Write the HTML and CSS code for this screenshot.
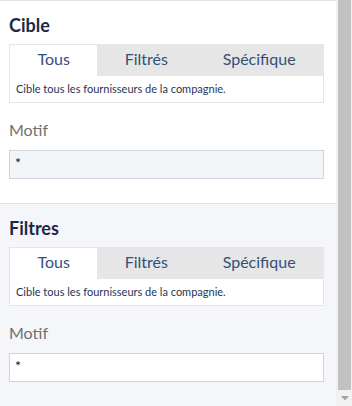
FILE: index.html
```html
<!DOCTYPE html>
<html lang="fr">
<head>
<meta charset="utf-8">
<title>Cible</title>
<link rel="stylesheet" href="styles.css">
</head>
<body>
<div class="app">
  <div class="panel">
    <section class="block block-first">
      <h2 class="block-title">Cible</h2>
      <div class="tabs">
        <div class="tab-list">
          <div class="tab tab-active">Tous</div>
          <div class="tab">Filtrés</div>
          <div class="tab">Spécifique</div>
        </div>
        <div class="tab-desc">Cible tous les fournisseurs de la compagnie.</div>
      </div>
      <div class="field-label">Motif</div>
      <div class="field field-muted">*</div>
    </section>
    <section class="block block-alt">
      <h2 class="block-title">Filtres</h2>
      <div class="tabs">
        <div class="tab-list">
          <div class="tab tab-active">Tous</div>
          <div class="tab">Filtrés</div>
          <div class="tab">Spécifique</div>
        </div>
        <div class="tab-desc">Cible tous les fournisseurs de la compagnie.</div>
      </div>
      <div class="field-label">Motif</div>
      <div class="field">*</div>
    </section>
  </div>
  <div class="scrollbar">
    <div class="scroll-thumb"></div>
    <div class="scroll-btn">
      <svg width="8" height="5" viewBox="0 0 8 5"><polygon points="0,0 8,0 4,4.5" fill="#a3a3a3"/></svg>
    </div>
  </div>
</div>
</body>
</html>
```

FILE: styles.css
```css
* { box-sizing: border-box; }
html, body {
  margin: 0;
  padding: 0;
  height: 406px;
  overflow: hidden;
  font-family: Lato, "Open Sans", sans-serif;
}
.app {
  display: flex;
  height: 406px;
}
.panel {
  flex: 1;
  display: flex;
  flex-direction: column;
  border-top: 1px solid #e3e3e6;
  background: #ffffff;
}
.block {
  padding: 13px 12px 24px 9px;
}
.block-first {
  border-bottom: 1px solid #e3e3e8;
}
.block-alt {
  flex: 1;
  background: #f5f6fa;
  padding-top: 13px;
}
.block-title {
  margin: 0;
  font-size: 18px;
  line-height: 22px;
  font-weight: 700;
  color: #1b2a44;
}
.tabs {
  margin-top: 8px;
  border: 1px solid #e6e6e6;
  background: #fff;
}
.tab-list {
  display: flex;
}
.tab {
  flex: 1 1 auto;
  text-align: center;
  font-size: 16px;
  line-height: 19px;
  padding: 4px 0 8px;
  color: #33507a;
  background: #e6e6e6;
}
.tab-active {
  background: #ffffff;
}
.tab-desc {
  font-size: 11px;
  line-height: 13px;
  padding: 6px 6px 7px;
  color: #1f3556;
}
.field-label {
  margin-top: 17px;
  font-size: 16px;
  line-height: 19px;
  color: #707070;
}
.field {
  margin-top: 11px;
  height: 29px;
  border: 1px solid #cdd5de;
  background: #ffffff;
  font-size: 14px;
  line-height: 16px;
  padding: 4px 5px;
  color: #111;
}
.field-muted {
  background: #f4f5f9;
}
.scrollbar {
  width: 16px;
  display: flex;
  flex-direction: column;
  background: #f1f1f1;
}
.scroll-thumb {
  flex: 1;
  margin: 0 1px 0 2px;
  background: #c1c1c1;
}
.scroll-btn {
  height: 16px;
  display: flex;
  align-items: center;
  justify-content: center;
  padding-left: 1px;
}
.scroll-btn svg { display: block; }
```
